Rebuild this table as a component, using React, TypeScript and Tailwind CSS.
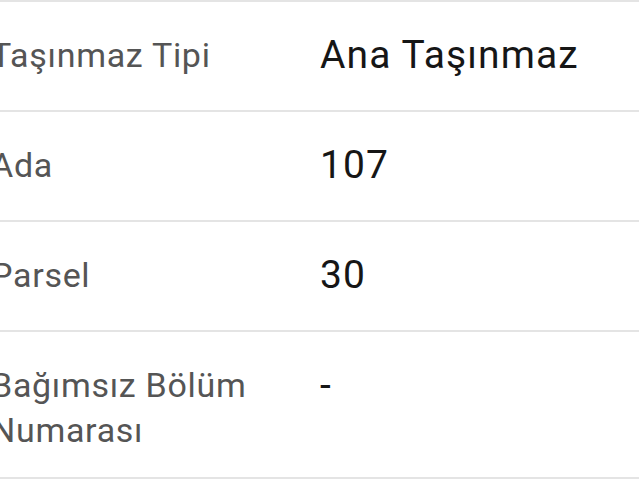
const rows = [
  { label: 'Taşınmaz Tipi', value: 'Ana Taşınmaz' },
  { label: 'Ada', value: '107' },
  { label: 'Parsel', value: '30' },
  { label: 'Bağımsız Bölüm Numarası', value: '-' },
];

export default function App() {
  return (
    <div className="h-[480px] w-[639px] overflow-hidden bg-white font-['Roboto',sans-serif]">
      <div className="border-t-2 border-[#e4e4e4]">
        {rows.map((r, i) => (
          <div
            key={r.label}
            className={
              'flex border-b-2 border-[#e4e4e4] pt-[31px] ' +
              (i === rows.length - 1 ? 'pb-[24px]' : 'pb-[32px]')
            }
          >
            <div className="-ml-[9px] w-[329px] shrink-0 pr-[60px] text-[34px] leading-[45px] tracking-[0.7px] text-[#555555]">
              {r.label}
            </div>
            <div className="text-[39px] leading-[45px] tracking-[1.1px] text-[#161616]">{r.value}</div>
          </div>
        ))}
      </div>
    </div>
  );
}
